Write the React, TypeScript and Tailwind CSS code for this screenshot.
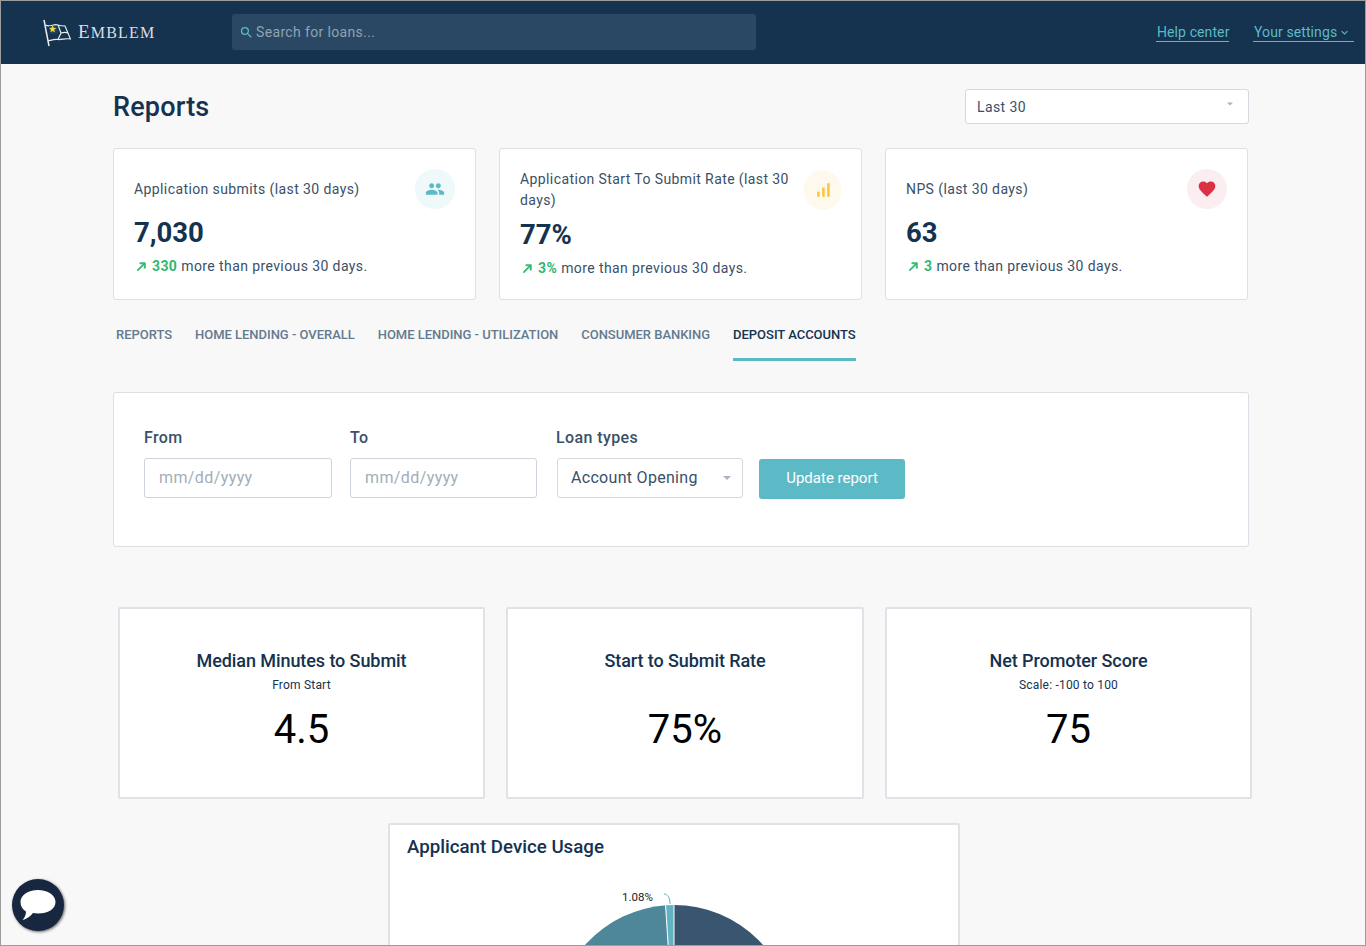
import React from "react";
import { MdPeople, MdFavorite, MdSignalCellularAlt, MdSearch, MdKeyboardArrowDown } from "react-icons/md";

const roboto = { fontFamily: "Roboto, sans-serif" };

const Caret = () => (
  <span className="w-0 h-0 border-x-[4px] border-x-transparent border-t-[4px] border-t-[#a9b4c0]" />
);

const TrendArrow = () => (
  <svg width="13" height="13" viewBox="0 0 24 24" fill="#34b76f" stroke="#34b76f" strokeWidth="1.5" className="mr-[4px] shrink-0">
    <path d="M9 5v2h6.59L4 18.59 5.41 20 17 8.41V15h2V5z" />
  </svg>
);

const FlagLogo = () => (
  <svg width="28" height="28" viewBox="0 0 28 28" fill="none" stroke="#e8ecef" strokeWidth="1.2">
    <path d="M1 1 L6 27" strokeWidth="1.5" />
    <path d="M2.5 6 C7 9 11 4 15 6 C18 7 20 7 22 7 L27.5 20 C22 19 19 21 15 20.5 C11 20 9 21 5 22" />
    <path d="M15 6 L18 14 L15 20.5 M18 14 C21 13 23 13 25 14" />
    <path d="M6 7 L14 7 L15 14 L7.5 15 Z" fill="#23425d" stroke="none" />
    <path d="M9.5 6.5 L10.7 9.2 L13.5 9.4 L11.3 11.2 L12 14 L9.5 12.5 L7.2 14 L7.8 11.2 L5.8 9.4 L8.4 9.2 Z" fill="#f0d93c" stroke="none" transform="translate(0.5 0) scale(0.95)" />
  </svg>
);

const TopBar = () => (
  <header className="h-[63px] bg-[#15324f] flex items-center pl-[42px] pr-[11px] shrink-0" style={roboto}>
    <div className="flex items-center w-[189px] gap-[7px]">
      <FlagLogo />
      <span className="text-[#d9dfe4] text-[19px] tracking-[1.2px]" style={{ fontFamily: '"Liberation Serif", serif' }}>
        E<span className="text-[16px]">MBLEM</span>
      </span>
    </div>
    <div className="w-[524px] h-[36px] mb-[1px] bg-[#2a4863] rounded-[3px] flex items-center pl-[7px] gap-[2px] text-[14px] tracking-[0.35px] text-[#8fa3b5]">
      <MdSearch className="text-[#5cbac6] text-[15px]" />
      <span className="mt-[1px]">Search for loans...</span>
    </div>
    <div className="ml-auto flex items-center gap-[24px] text-[14px] tracking-[0.1px] text-[#5cbac6]">
      <span className="border-b border-[#5cbac6] leading-[18px] w-[73px] pl-[1px] whitespace-nowrap">Help center</span>
      <span className="border-b border-[#5cbac6] leading-[18px] flex items-center w-[101px] pl-[1px] whitespace-nowrap">
        Your settings
        <MdKeyboardArrowDown className="text-[13px] ml-[1px]" />
      </span>
    </div>
  </header>
);

type KpiProps = {
  title: string;
  value: string;
  delta: string;
  icon: React.ReactNode;
  iconBg: string;
  compact?: boolean;
};

const KpiCard = ({ title, value, delta, icon, iconBg, compact }: KpiProps) => (
  <div className={`w-[363px] h-[152px] bg-white border border-[#dcdfe6] rounded-[3px] relative pl-[20px] ${compact ? "pt-[20px]" : "pt-[30px]"}`}>
    <div className={`absolute rounded-full flex items-center justify-center ${iconBg} ${compact ? "right-[20px] top-[21px] w-[37px] h-[40px]" : "right-[20px] top-[20px] w-[40px] h-[40px]"}`}>
      {icon}
    </div>
    <div className={`text-[14px] tracking-[0.4px] leading-[21px] text-[#3a5068] ${compact ? "w-[280px]" : ""}`}>{title}</div>
    <div className={`text-[27.5px] font-bold text-[#15324f] leading-[34px] ${compact ? "mt-[7px]" : "mt-[16px]"}`}>{value}</div>
    <div className="flex items-center text-[14px] tracking-[0.4px] text-[#3a5068] mt-[6px] pl-[1px] leading-[21px]">
      <TrendArrow />
      <span className="font-bold text-[#34b76f] mr-[4px]">{delta}</span>
      more than previous 30 days.
    </div>
  </div>
);

const tabs = ["Reports", "Home Lending - Overall", "Home Lending - Utilization", "Consumer Banking", "Deposit Accounts"];

const Tabs = () => (
  <div className="flex gap-[23px] pl-[3px] mt-[24px] h-[38px]">
    {tabs.map((t, i) => (
      <div
        key={t}
        className={`uppercase text-[13px] font-medium h-[37px] leading-[22px] tracking-[-0.025px] ${i === 4 ? "text-[#15324f] border-b-[3px] border-[#5cbac6]" : "text-[#647a8e]"}`}
      >
        {t}
      </div>
    ))}
  </div>
);

const DateField = ({ label, className }: { label: string; className: string }) => (
  <div className={className}>
    <div className="text-[16px] font-medium tracking-[0.4px] text-[#3a5068] leading-[20px] mt-[1px] mb-[10px]">{label}</div>
    <div className="h-[40px] bg-white border border-[#ced4dc] rounded-[3px] flex items-center pl-[14px] text-[16px] tracking-[0.4px] text-[#a3adb8]">
      mm/dd/yyyy
    </div>
  </div>
);

const StatCard = ({ title, sub, value, width }: { title: string; sub?: string; value: string; width: string }) => (
  <div className={`${width} h-[192px] bg-white border-2 border-[#dfe3e8] rounded-[2px] text-center pt-[40px]`}>
    <div className="text-[18px] font-medium text-[#15324f] leading-[24px] tracking-[-0.08px]">{title}</div>
    <div className="text-[12px] text-[#15324f] h-[18px] leading-[18px] mt-[3px] tracking-[0.2px]">{sub}</div>
    <div className="text-[40px] text-black leading-[48px] mt-[12px]">{value}</div>
  </div>
);

const DevicePie = () => (
  <svg width="300" height="80" viewBox="0 0 300 80" className="block ml-[130px] mt-[10px]">
    <path d="M154 34 A119 119 0 0 1 273 153 L154 153 Z" fill="#3a5570" />
    <path d="M146 34.3 A119 119 0 0 0 35 153 L154 153 Z" fill="#4d8799" />
    <path d="M146 34.3 A119 119 0 0 1 154 34 L154 153 Z" fill="#5fb3c2" />
    <path d="M154 34 L154 80" stroke="#fff" strokeWidth="1" />
    <path d="M145.500 34 L148.500 80" stroke="#fff" strokeWidth="1" />
    <path d="M144 23 C148 23 150 27 150 33" stroke="#5fb3c2" strokeWidth="1" fill="none" />
    <text x="102" y="30" fontSize="11.5" fill="#222" fontFamily="Roboto, sans-serif">1.08%</text>
  </svg>
);

export default function App() {
  return (
    <div className="w-[1366px] h-[946px] relative overflow-hidden bg-[#f8f8f9] border border-[#9c9c9c] flex flex-col" style={roboto}>
      <TopBar />
      <main className="pl-[112px] flex-1">
        <div className="flex items-center justify-between w-[1136px] mt-[25px] h-[35px]">
          <h1 className="text-[27px] font-medium text-[#15324f] tracking-[0.2px] mt-[1px]">Reports</h1>
          <div className="w-[284px] h-[35px] bg-white border border-[#d4d9e0] rounded-[3px] flex items-center justify-between pl-[11px] pr-[14px] pt-[1px] text-[14px] tracking-[0.4px] text-[#3a5068]">
            Last 30
            <span className="-mt-[7px] flex scale-75"><Caret /></span>
          </div>
        </div>

        <div className="flex gap-[23px] mt-[24px]">
          <KpiCard
            title="Application submits (last 30 days)"
            value="7,030"
            delta="330"
            icon={<MdPeople className="text-[#5cbac6] text-[20px]" />}
            iconBg="bg-[#eff9fa]"
          />
          <KpiCard
            title="Application Start To Submit Rate (last 30 days)"
            value="77%"
            delta="3%"
            compact
            icon={<MdSignalCellularAlt className="text-[#fbc43c] text-[20px]" />}
            iconBg="bg-[#fef9ec]"
          />
          <KpiCard
            title="NPS (last 30 days)"
            value="63"
            delta="3"
            icon={<MdFavorite className="text-[#dc3045] text-[20px]" />}
            iconBg="bg-[#fbeef0]"
          />
        </div>

        <Tabs />

        <div className="w-[1136px] h-[155px] mt-[30px] bg-white border border-[#dcdfe6] rounded-[3px] flex items-start pl-[30px] pt-[34px]">
          <DateField label="From" className="w-[188px]" />
          <DateField label="To" className="w-[187px] ml-[18px]" />
          <div className="w-[186px] ml-[20px]">
            <div className="text-[16px] font-medium tracking-[0.4px] text-[#3a5068] leading-[20px] mt-[1px] mb-[10px] -ml-[1px]">Loan types</div>
            <div className="h-[40px] bg-white border border-[#d4d9e0] rounded-[3px] flex items-center justify-between pl-[13px] pr-[11px] text-[16px] tracking-[0.3px] text-[#3a5068]">
              Account Opening
              <Caret />
            </div>
          </div>
          <button className="w-[146px] h-[40px] ml-[16px] mt-[32px] pb-[2px] bg-[#5cbac6] rounded-[3px] text-white text-[15px]">Update report</button>
        </div>

        <div className="flex mt-[60px] ml-[5px] gap-[21px]">
          <StatCard width="w-[367px]" title="Median Minutes to Submit" sub="From Start" value="4.5" />
          <StatCard width="w-[358px]" title="Start to Submit Rate" value="75%" />
          <StatCard width="w-[367px]" title="Net Promoter Score" sub="Scale: -100 to 100" value="75" />
        </div>

        <div className="w-[572px] h-[200px] ml-[275px] mt-[24px] bg-white border-2 border-[#dfe3e8] rounded-[2px] pl-[17px] pt-[8px]">
          <div className="text-[18.7px] font-medium text-[#15324f] leading-[28px]">Applicant Device Usage</div>
          <div className="-ml-[17px]"><DevicePie /></div>
        </div>
      </main>

      <div className="absolute left-[11px] top-[878px] w-[52px] h-[52px] rounded-full bg-[#16273f] shadow-[1px_1px_3px_rgba(0,0,0,0.6)] flex items-center justify-center">
        <svg width="36" height="31" viewBox="0 0 36 31" fill="#fff">
          <path d="M18 0 C28 0 35.500 5 35.500 12 C35.500 19 28 23.500 18 23.500 C16 23.500 14.500 23.300 13 23 C10 27 5.500 29.500 2.500 30 C4.500 28 6 25 6 21.500 C2.500 19.500 0.500 16 0.500 12 C0.500 5 8 0 18 0 Z" />
        </svg>
      </div>
    </div>
  );
}
